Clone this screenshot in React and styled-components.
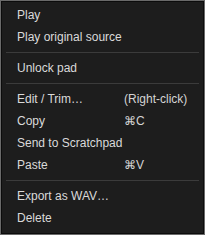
import React from "react";
import styled, { createGlobalStyle } from "styled-components";

const Global = createGlobalStyle`
  html, body {
    margin: 0;
    padding: 0;
    background: #1c1c1c;
  }
`;

const Menu = styled.div`
  box-sizing: border-box;
  width: 205px;
  height: 235px;
  background: #1d1d1d;
  border: 1px solid #6a6a6a;
  box-shadow: inset 0 0 0 1px #0c0c0c;
  padding: 3px 5px;
  font-family: "Liberation Sans", Arial, sans-serif;
  font-size: 12px;
  color: #dadada;
`;

const Item = styled.div`
  display: grid;
  grid-template-columns: 107px 1fr;
  align-items: center;
  height: 22px;
  padding-left: 11px;
  white-space: nowrap;
`;

const Shortcut = styled.span`
  color: #d4d4d4;
`;

const Separator = styled.div`
  height: 9px;
  display: flex;
  align-items: center;

  &::after {
    content: "";
    flex: 1;
    height: 1px;
    background: #3b3b3b;
  }
`;

const groups = [
  [{ label: "Play" }, { label: "Play original source" }],
  [{ label: "Unlock pad" }],
  [
    { label: "Edit / Trim…", key: "(Right-click)" },
    { label: "Copy", key: "⌘C" },
    { label: "Send to Scratchpad" },
    { label: "Paste", key: "⌘V" },
  ],
  [{ label: "Export as WAV…" }, { label: "Delete" }],
];

export default function App() {
  return (
    <>
      <Global />
      <Menu>
        {groups.map((group, i) => (
          <React.Fragment key={i}>
            {i > 0 && <Separator />}
            {group.map((item) => (
              <Item key={item.label}>
                <span>{item.label}</span>
                {item.key && <Shortcut>{item.key}</Shortcut>}
              </Item>
            ))}
          </React.Fragment>
        ))}
      </Menu>
    </>
  );
}
